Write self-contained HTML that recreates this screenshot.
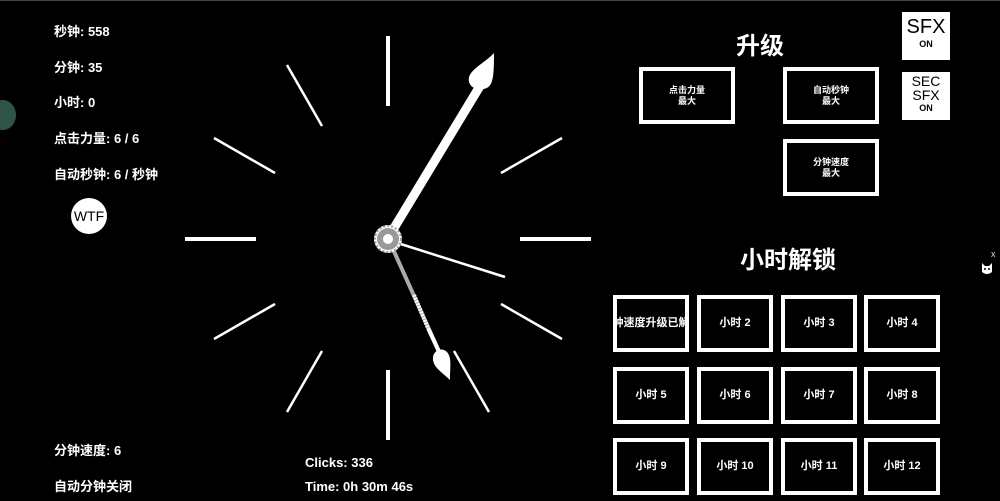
<!DOCTYPE html>
<html><head><meta charset="utf-8"><style>
body{margin:0;width:1000px;height:501px;background:#000;overflow:hidden;position:relative;font-family:"Liberation Sans","Noto Sans CJK SC",sans-serif;color:#fff}
.t{position:absolute;font-size:13px;font-weight:bold;line-height:16px;white-space:nowrap}
.b{position:absolute;box-sizing:border-box;border:4px solid #fff;display:flex;align-items:center;justify-content:center;text-align:center;font-size:9px;line-height:11px;font-weight:bold;overflow:hidden;white-space:nowrap}
.h{width:76px;height:57px;font-size:11px}
.sq{position:absolute;background:#fff;color:#000;font-family:"Liberation Sans",sans-serif;text-align:center}
</style></head><body>
<div style="position:absolute;top:0;left:0;width:1000px;height:1px;background:#444"></div>
<div style="position:absolute;left:-10px;top:100px;width:26px;height:30px;border-radius:50%;background:#2e5446"></div>
<div class="t" style="left:54px;top:24px">秒钟: 558</div>
<div class="t" style="left:54px;top:60px">分钟: 35</div>
<div class="t" style="left:54px;top:95px">小时: 0</div>
<div class="t" style="left:54px;top:131px">点击力量: 6 / 6</div>
<div class="t" style="left:54px;top:167px">自动秒钟: 6 / 秒钟</div>
<div style="position:absolute;left:71px;top:198px;width:36px;height:36px;border-radius:50%;background:#fff;color:#000;font-size:14px;line-height:36px;text-align:center;font-family:'Liberation Sans',sans-serif">WTF</div>
<div class="t" style="left:54px;top:443px">分钟速度: 6</div>
<div class="t" style="left:54px;top:479px">自动分钟关闭</div>
<div class="t" style="left:305px;top:455px">Clicks: 336</div>
<div class="t" style="left:305px;top:479px">Time: 0h 30m 46s</div>

<svg style="position:absolute;left:0;top:0" width="1000" height="501">
<g stroke="#fff" stroke-width="2.5">
<line x1="388" y1="36" x2="388" y2="106" stroke-width="4"/>
<line x1="388" y1="370" x2="388" y2="440" stroke-width="4"/>
<line x1="185" y1="239" x2="256" y2="239" stroke-width="4"/>
<line x1="520" y1="239" x2="591" y2="239" stroke-width="4"/>
<line x1="287" y1="65" x2="322" y2="126"/>
<line x1="489" y1="65" x2="454" y2="126"/>
<line x1="214" y1="138" x2="275" y2="173"/>
<line x1="562" y1="138" x2="501" y2="173"/>
<line x1="214" y1="339" x2="275" y2="304"/>
<line x1="562" y1="339" x2="501" y2="304"/>
<line x1="287" y1="412" x2="322" y2="351"/>
<line x1="489" y1="412" x2="454" y2="351"/>
</g>
<line x1="388" y1="238" x2="480" y2="86" stroke="#fff" stroke-width="9"/>
<path d="M494 53 C486 62 472 68 469 77 C467 86 476 91 484 89 C493 87 494 78 494 53Z" fill="#fff"/>
<line x1="388" y1="238" x2="441" y2="356" stroke="#aaa" stroke-width="4"/>
<line x1="414" y1="295" x2="428" y2="328" stroke="#fff" stroke-width="4" stroke-dasharray="2 1"/>
<line x1="428" y1="328" x2="441" y2="356" stroke="#fff" stroke-width="4"/>
<path d="M450 380 C442 372 432 367 433 357 C434 350 442 347 447 352 C452 358 450 366 450 380Z" fill="#fff"/>
<line x1="388" y1="240" x2="505" y2="277" stroke="#fff" stroke-width="2.5"/>
<circle cx="388" cy="239" r="14" fill="#fff"/>
<circle cx="388" cy="239" r="13" fill="none" stroke="#999" stroke-width="2" stroke-dasharray="2 2"/>
<circle cx="388" cy="239" r="11" fill="#999"/>
<circle cx="388" cy="239" r="5" fill="#fff"/>
</svg>

<div style="position:absolute;left:700px;top:26px;width:120px;text-align:center;font-size:24px;font-weight:bold">升级</div>
<div class="b" style="left:639px;top:67px;width:96px;height:57px">点击力量<br>最大</div>
<div class="b" style="left:783px;top:67px;width:96px;height:57px">自动秒钟<br>最大</div>
<div class="b" style="left:783px;top:139px;width:96px;height:57px">分钟速度<br>最大</div>
<div class="sq" style="left:902px;top:12px;width:48px;height:48px;font-size:20px;line-height:22px;padding-top:4px;box-sizing:border-box">SFX<div style="font-size:9px;line-height:12px;font-weight:bold">ON</div></div>
<div class="sq" style="left:902px;top:72px;width:48px;height:48px;font-size:14px;line-height:14px;padding-top:2px;box-sizing:border-box">SEC<br>SFX<div style="font-size:9px;line-height:12px;font-weight:bold">ON</div></div>

<div style="position:absolute;left:708px;top:240px;width:160px;text-align:center;font-size:24px;font-weight:bold">小时解锁</div>
<div class="b h" style="left:613px;top:295px"><span style="flex-shrink:0">分钟速度升级已解锁</span></div>
<div class="b h" style="left:697px;top:295px">小时 2</div>
<div class="b h" style="left:781px;top:295px">小时 3</div>
<div class="b h" style="left:864px;top:295px">小时 4</div>
<div class="b h" style="left:613px;top:367px">小时 5</div>
<div class="b h" style="left:697px;top:367px">小时 6</div>
<div class="b h" style="left:781px;top:367px">小时 7</div>
<div class="b h" style="left:864px;top:367px">小时 8</div>
<div class="b h" style="left:613px;top:438px">小时 9</div>
<div class="b h" style="left:697px;top:438px">小时 10</div>
<div class="b h" style="left:781px;top:438px">小时 11</div>
<div class="b h" style="left:864px;top:438px">小时 12</div>

<div style="position:absolute;left:991px;top:249px;font-size:9px;color:#ddd">x</div>
<svg style="position:absolute;left:980px;top:261px" width="14" height="16"><path d="M2 2 L5 5 L9 5 L12 2 L12 11 Q7 15 2 11Z" fill="#fff"/><circle cx="5" cy="8" r="1" fill="#000"/><circle cx="9" cy="8" r="1" fill="#000"/></svg>
</body></html>
